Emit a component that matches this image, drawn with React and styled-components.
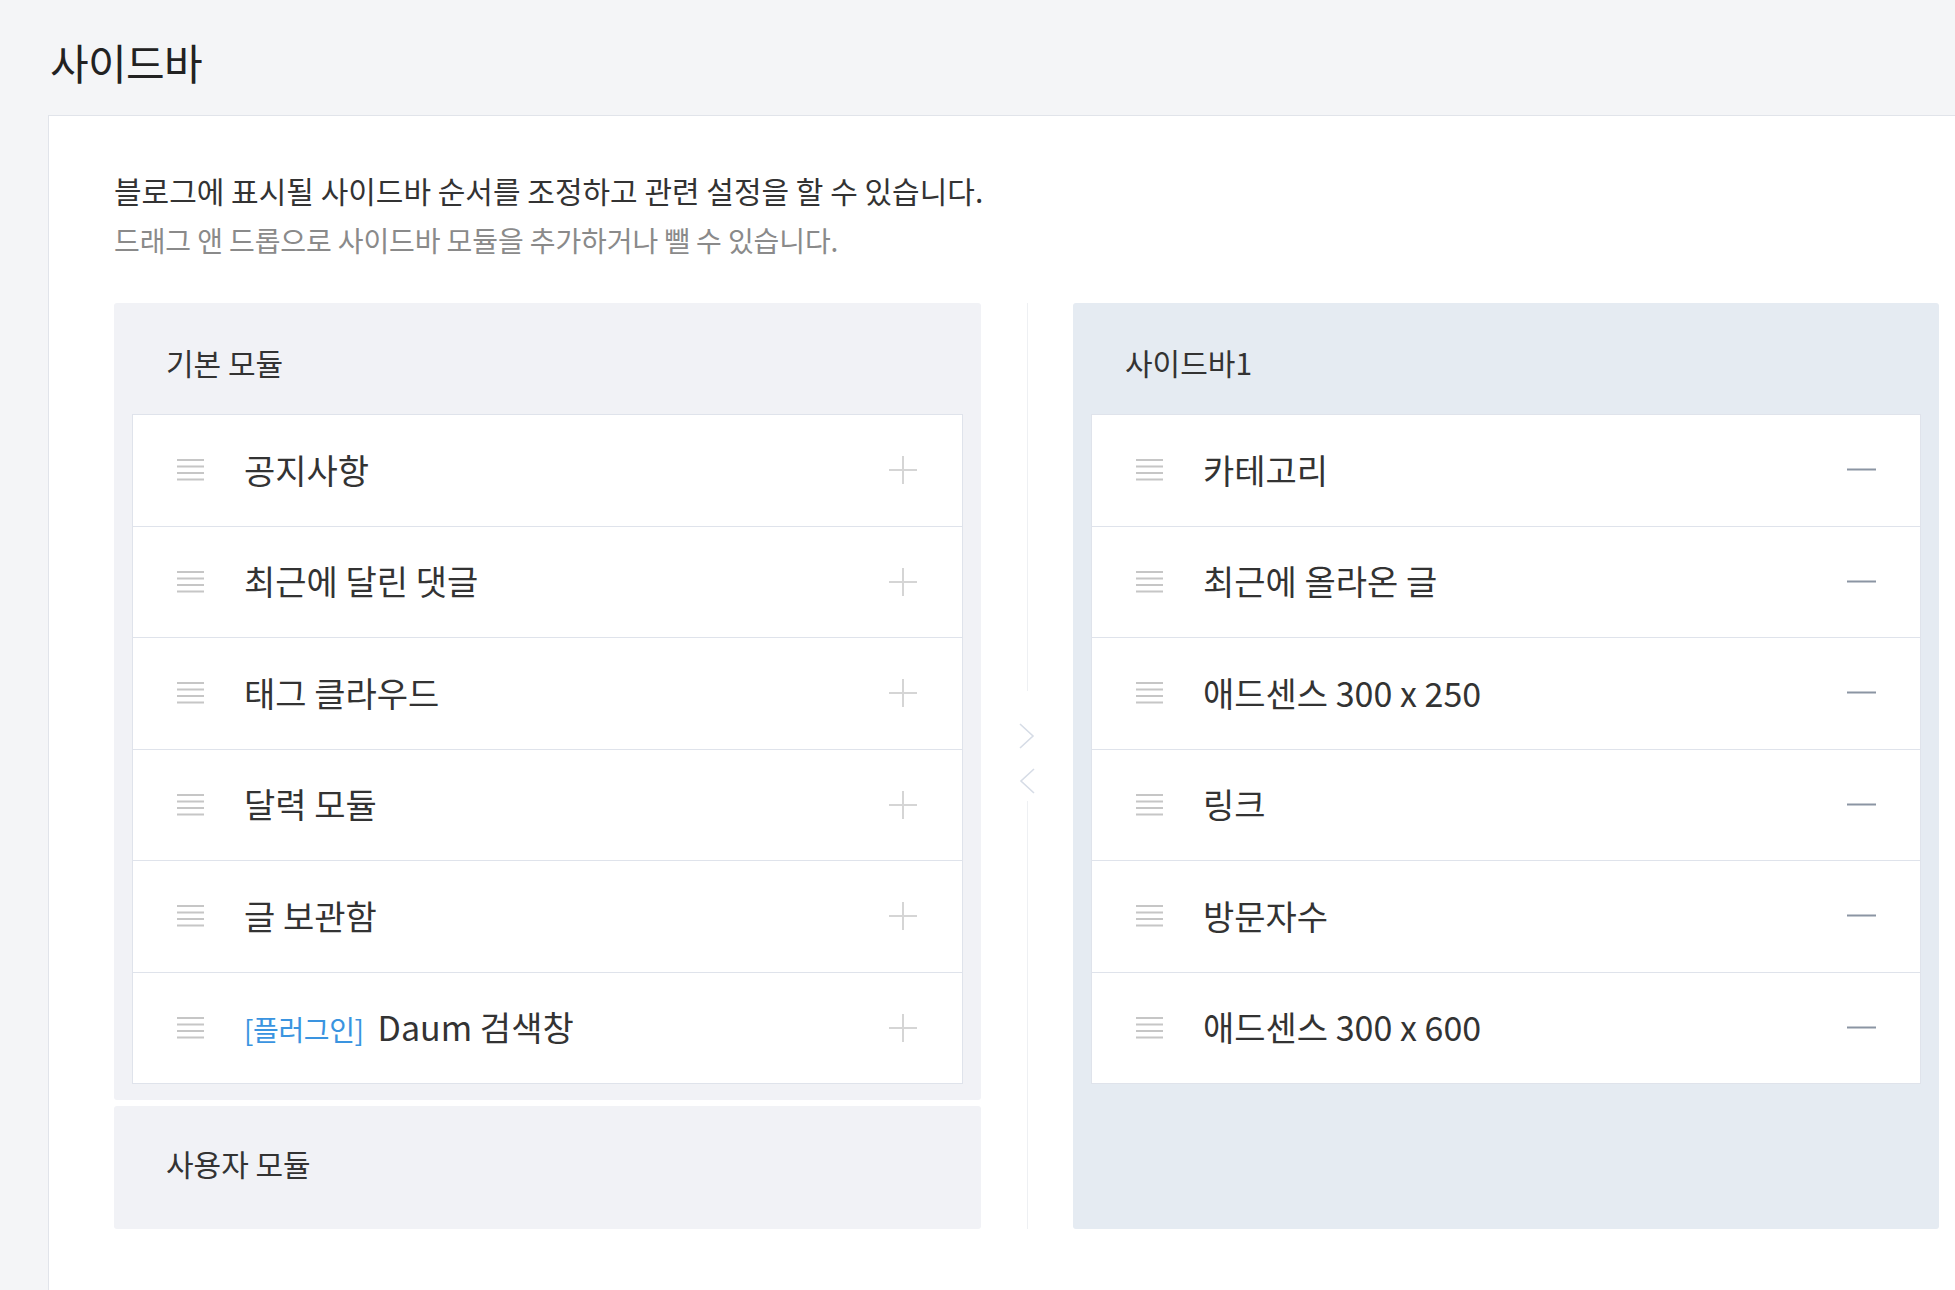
import React from 'react';
import styled, { createGlobalStyle } from 'styled-components';

const GlobalStyle = createGlobalStyle`
  html, body {
    margin: 0;
    padding: 0;
    background: #f4f5f7;
    font-family: "Noto Sans CJK KR", "Noto Sans", sans-serif;
    color: #333;
    overflow: hidden;
  }
`;

const Page = styled.div`
  padding-left: 48px;
`;

const PageTitle = styled.h1`
  margin: 0;
  height: 115px;
  display: flex;
  align-items: center;
  padding-left: 2px;
  font-size: 42px;
  font-weight: 400;
  letter-spacing: -0.6px;
  color: #222;
  padding-top: 8px;
  box-sizing: border-box;
`;

const Card = styled.div`
  background: #fff;
  border-top: 1px solid #e1e4ea;
  border-left: 1px solid #e1e4ea;
  padding: 52px 0 80px 65px;
  min-height: 1200px;
  box-sizing: border-box;
`;

const Desc = styled.p`
  margin: 0;
  font-size: ${p => (p.sub ? '28px' : '30px')};
  color: ${p => (p.sub ? '#8a8a8a' : '#333')};
  letter-spacing: ${p => (p.sub ? '-0.1px' : '0')};
  line-height: 44px;
  margin-top: ${p => (p.sub ? '6px' : '0')};
`;

const Columns = styled.div`
  display: grid;
  grid-template-columns: 867px 92px 866px;
  margin-top: 41px;
  align-items: stretch;
`;

const LeftColumn = styled.div`
  display: flex;
  flex-direction: column;
  gap: 6px;
`;

const Panel = styled.div`
  background: ${p => (p.active ? '#e5ebf2' : '#f1f2f6')};
  border-radius: 3px;
  padding: ${p => (p.short ? '0 18px' : '0 18px 16px')};
  min-height: ${p => (p.short ? '123px' : 'auto')};
  box-sizing: border-box;
`;

const PanelTitle = styled.div`
  height: ${p => (p.compact ? '114px' : '111px')};
  display: flex;
  align-items: center;
  padding-left: 34px;
  padding-top: ${p => (p.compact ? '0' : '6px')};
  font-size: 30px;
  letter-spacing: 0;
  color: #333;
  box-sizing: border-box;
`;

const List = styled.ul`
  list-style: none;
  margin: 0;
  padding: 0;
  border: 1px solid #dfe3eb;
  background: #fff;
`;

const Item = styled.li`
  display: flex;
  align-items: center;
  height: 110.5px;
  padding: 0 44px 0 44px;
  border-top: 1px solid #dfe3eb;
  &:first-child {
    border-top: none;
  }
`;

const Label = styled.span`
  flex: 1;
  display: flex;
  align-items: baseline;
  margin-left: 40px;
  font-size: 34px;
  letter-spacing: 0;
  color: #333;
  padding-bottom: 2px;
`;

const Tag = styled.span`
  color: #3a94e0;
  font-size: 28px;
  letter-spacing: -0.4px;
  margin-right: 14px;
`;

const Divider = styled.div`
  display: flex;
  flex-direction: column;
  align-items: center;
`;

const Line = styled.div`
  width: 1px;
  background: #eef0f3;
  flex: ${p => p.grow};
`;

const Arrows = styled.div`
  height: 110px;
  display: flex;
  flex-direction: column;
  align-items: center;
  padding-top: 32px;
  gap: 19px;
  box-sizing: border-box;
`;

const Handle = () => (
  <svg width="27" height="22" viewBox="0 0 27 22">
    {[0, 6.5, 13, 19.5].map(y => (
      <rect key={y} x="0" y={y} width="27" height="2" fill="#c6c6c6" />
    ))}
  </svg>
);

const Plus = () => (
  <svg width="30" height="30" viewBox="0 0 30 30">
    <path d="M1 15H29M15 1V29" stroke="#d5d5d5" strokeWidth="2" fill="none" />
  </svg>
);

const Minus = () => (
  <svg width="30" height="30" viewBox="0 0 30 30">
    <path d="M1 14.5H30" stroke="#8b95a3" strokeWidth="2" fill="none" />
  </svg>
);

const Chevron = ({ dir }) => (
  <svg width="16" height="26" viewBox="0 0 16 26">
    <polyline
      points={dir === 'right' ? '1,1 14,13 1,25' : '15,1 2,13 15,25'}
      stroke="#d6dce6"
      strokeWidth="1.6"
      fill="none"
    />
  </svg>
);

const basicModules = [
  { name: '공지사항' },
  { name: '최근에 달린 댓글' },
  { name: '태그 클라우드' },
  { name: '달력 모듈' },
  { name: '글 보관함' },
  { name: 'Daum 검색창', tag: '[플러그인]' },
];

const sidebarModules = ['카테고리', '최근에 올라온 글', '애드센스 300 x 250', '링크', '방문자수', '애드센스 300 x 600'];

export default function App() {
  return (
    <Page>
      <GlobalStyle />
      <PageTitle>사이드바</PageTitle>
      <Card>
        <Desc>블로그에 표시될 사이드바 순서를 조정하고 관련 설정을 할 수 있습니다.</Desc>
        <Desc sub>드래그 앤 드롭으로 사이드바 모듈을 추가하거나 뺄 수 있습니다.</Desc>

        <Columns>
          <LeftColumn>
            <Panel>
              <PanelTitle>기본 모듈</PanelTitle>
              <List>
                {basicModules.map(m => (
                  <Item key={m.name}>
                    <Handle />
                    <Label>
                      {m.tag && <Tag>{m.tag}</Tag>}
                      {m.name}
                    </Label>
                    <Plus />
                  </Item>
                ))}
              </List>
            </Panel>
            <Panel short>
              <PanelTitle compact>사용자 모듈</PanelTitle>
            </Panel>
          </LeftColumn>

          <Divider>
            <Line grow={388} />
            <Arrows>
              <Chevron dir="right" />
              <Chevron dir="left" />
            </Arrows>
            <Line grow={427} />
          </Divider>

          <Panel active>
            <PanelTitle>사이드바1</PanelTitle>
            <List>
              {sidebarModules.map(name => (
                <Item key={name}>
                  <Handle />
                  <Label>{name}</Label>
                  <Minus />
                </Item>
              ))}
            </List>
          </Panel>
        </Columns>
      </Card>
    </Page>
  );
}
